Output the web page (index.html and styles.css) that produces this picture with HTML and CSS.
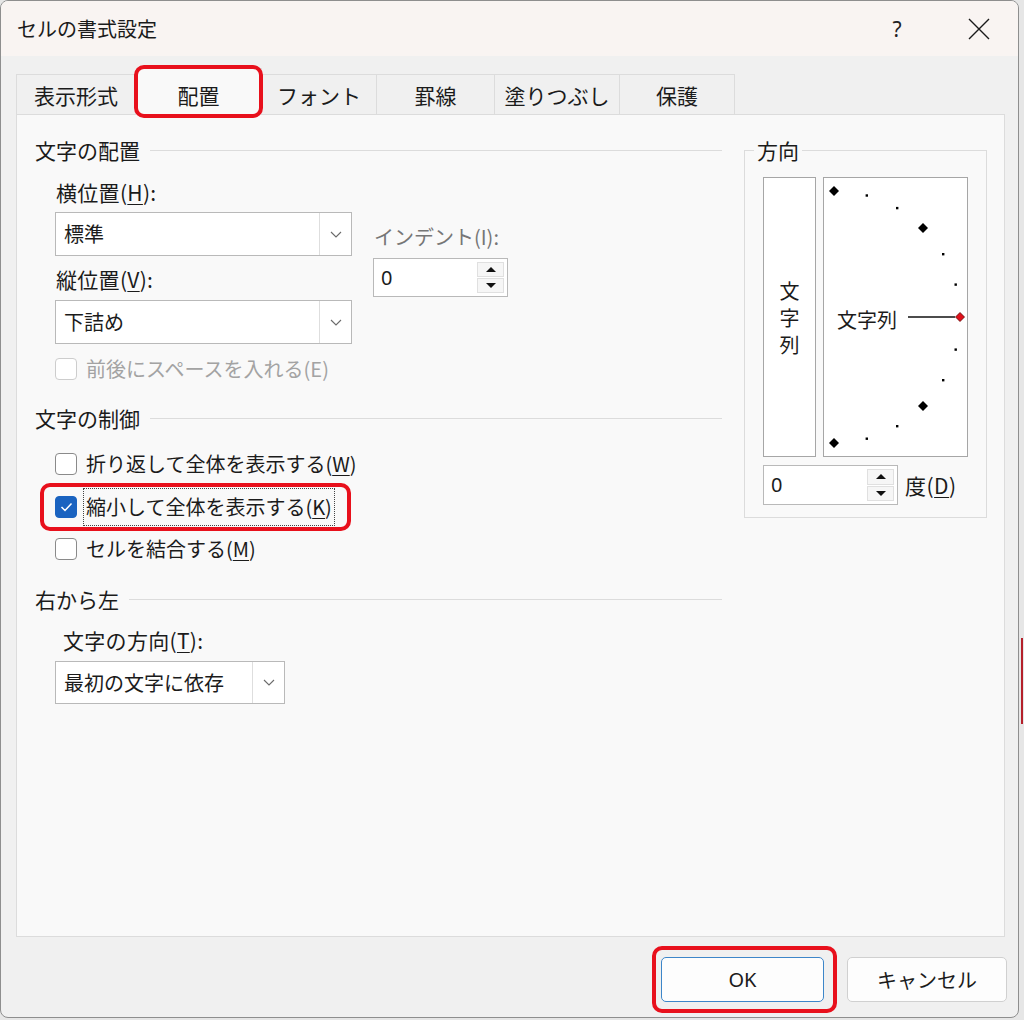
FILE: index.html
```html
<!DOCTYPE html>
<html lang="ja">
<head>
<meta charset="utf-8">
<title>セルの書式設定</title>
<link rel="stylesheet" href="styles.css">
</head>
<body>
<div class="edge-mark"></div>
<div class="window">
  <div class="titlebar">
    <div class="title">セルの書式設定</div>
    <div class="help">?</div>
    <div class="close">
      <svg width="24" height="22" viewBox="0 0 24 22"><path d="M2 1 L22 21 M22 1 L2 21" stroke="#1a1a1a" stroke-width="1.4" fill="none"/></svg>
    </div>
  </div>

  <div class="tabs">
    <div class="tab t1">表示形式</div>
    <div class="tab t2 active">配置<span class="hl hl-tab"></span></div>
    <div class="tab t3">フォント</div>
    <div class="tab t4">罫線</div>
    <div class="tab t5">塗りつぶし</div>
    <div class="tab t6">保護</div>
  </div>

  <div class="panel">
    <div class="left">
      <div class="group-head">文字の配置</div>
      <div class="align-row">
        <div class="fields">
          <div class="label">横位置(<u>H</u>):</div>
          <div class="combo">
            <div class="combo-text">標準</div>
            <div class="combo-btn"><svg width="12" height="7" viewBox="0 0 12 7"><polyline points="1,1 6,6 11,1" fill="none" stroke="#6b6b6b" stroke-width="1.1"/></svg></div>
          </div>
          <div class="label mt9">縦位置(<u>V</u>):</div>
          <div class="combo mt7">
            <div class="combo-text">下詰め</div>
            <div class="combo-btn"><svg width="12" height="7" viewBox="0 0 12 7"><polyline points="1,1 6,6 11,1" fill="none" stroke="#6b6b6b" stroke-width="1.1"/></svg></div>
          </div>
        </div>
        <div class="indent">
          <div class="label gray small">インデント(I):</div>
          <div class="spin indent-spin">
            <div class="spin-text">0</div>
            <div class="spin-btns">
              <div class="spin-b"><span class="tri-up"></span></div>
              <div class="spin-b"><span class="tri-down"></span></div>
            </div>
          </div>
        </div>
      </div>
      <div class="check disabled sub mt11">
        <span class="box"></span><span>前後にスペースを入れる(E)</span>
      </div>

      <div class="group-head mt21">文字の制御</div>
      <div class="check sub mt18">
        <span class="box"></span><span>折り返して全体を表示する(<u>W</u>)</span>
      </div>
      <div class="check sub mt15 rel">
        <span class="box checked"><svg width="13" height="10" viewBox="0 0 13 10"><polyline points="1.5,5 5,8.5 11.5,1.5" fill="none" stroke="#fff" stroke-width="1.5"/></svg></span><span class="focus">縮小して全体を表示する(<u>K</u>)</span>
        <span class="hl hl-k"></span>
      </div>
      <div class="check sub mt14">
        <span class="box"></span><span>セルを結合する(<u>M</u>)</span>
      </div>

      <div class="group-head mt22">右から左</div>
      <div class="label sub2 mt13">文字の方向(<u>T</u>):</div>
      <div class="combo combo-dir sub mt7">
        <div class="combo-text">最初の文字に依存</div>
        <div class="combo-btn"><svg width="12" height="7" viewBox="0 0 12 7"><polyline points="1,1 6,6 11,1" fill="none" stroke="#6b6b6b" stroke-width="1.1"/></svg></div>
      </div>
    </div>

    <fieldset class="orient">
      <legend>方向</legend>
      <div class="orient-boxes">
        <div class="vbox"><span>文</span><span>字</span><span>列</span></div>
        <div class="dial">
          <svg width="143" height="278" viewBox="0 0 143 278">
            <g fill="#000">
              <polygon points="10,8 15,13 10,18 5,13"/>
              <rect x="41.6" y="16.3" width="2.4" height="2.4"/>
              <rect x="72" y="28.9" width="2.4" height="2.4"/>
              <polygon points="99,45 104,50 99,55 94,50"/>
              <rect x="118" y="75" width="2.4" height="2.4"/>
              <rect x="130.5" y="105.4" width="2.4" height="2.4"/>
              <rect x="130.5" y="170.4" width="2.4" height="2.4"/>
              <rect x="118" y="201" width="2.4" height="2.4"/>
              <polygon points="99,223 104,228 99,233 94,228"/>
              <rect x="72" y="247" width="2.4" height="2.4"/>
              <rect x="41.6" y="259.5" width="2.4" height="2.4"/>
              <polygon points="10,260 15,265 10,270 5,265"/>
            </g>
            <line x1="84" y1="139" x2="131" y2="139" stroke="#111" stroke-width="1.4"/>
            <polygon points="136,134.5 140.5,139 136,143.5 131.5,139" fill="#e0101a" stroke="#5a0000" stroke-width="0.8"/>
            <text x="13" y="150" class="dial-text">文字列</text>
          </svg>
        </div>
      </div>
      <div class="deg-row">
        <div class="spin deg-spin">
          <div class="spin-text">0</div>
          <div class="spin-btns">
            <div class="spin-b"><span class="tri-up"></span></div>
            <div class="spin-b"><span class="tri-down"></span></div>
          </div>
        </div>
        <div class="deg-label">度(<u>D</u>)</div>
      </div>
    </fieldset>
  </div>

  <div class="footer">
    <div class="btn ok rel">OK<span class="hl hl-ok"></span></div>
    <div class="btn cancel">キャンセル</div>
  </div>
</div>
</body>
</html>
```

FILE: styles.css
```css
* { box-sizing: border-box; }

body {
  margin: 0;
  width: 1024px;
  height: 1020px;
  overflow: hidden;
  position: relative;
  background: #e6e6e6;
  font-family: "Noto Sans CJK JP", "Noto Sans", sans-serif;
  color: #1b1b1b;
  font-size: 20px;
}

u { text-decoration: underline; text-underline-offset: 3px; text-decoration-thickness: 1px; }

.edge-mark {
  position: absolute;
  left: 1021px;
  top: 638px;
  width: 2px;
  height: 86px;
  background: #b4202a;
}

.window {
  width: 1019px;
  height: 1018px;
  border: 1px solid #8e8e8e;
  border-radius: 8px;
  background: #f0f0f0;
  overflow: hidden;
}

.titlebar {
  height: 55px;
  background: #f9f4f2;
  display: flex;
  align-items: center;
  padding-left: 16px;
  font-size: 20px;
}
.title { flex: 1; line-height: 28px; }
.help {
  width: 60px;
  margin-right: 17px;
  text-align: center;
  font-family: "Noto Sans", sans-serif;
  font-size: 21px;
  color: #222;
}
.close {
  width: 70px;
  margin-right: 4px;
  display: flex;
  justify-content: center;
  align-items: center;
}

.tabs {
  display: flex;
  align-items: flex-end;
  margin-top: 18px;
  padding-left: 15px;
  height: 40px;
}
.tab {
  height: 40px;
  border: 1px solid #dcdcdc;
  border-bottom: none;
  border-left: none;
  display: flex;
  align-items: center;
  justify-content: center;
  font-size: 21px;
  line-height: 28px;
  background: #f0f0f0;
  position: relative;
}
.t1 { width: 120px; border-left: 1px solid #dcdcdc; }
.t2 { width: 126px; }
.t3 { width: 115px; }
.t4 { width: 118px; }
.t5 { width: 125px; }
.t6 { width: 115px; }
.tab.active {
  height: 47px;
  margin-bottom: -1px;
  background: #f9f9f9;
  z-index: 2;
  padding-bottom: 6px;
  padding-top: 0;
  align-items: flex-end;
}

.hl {
  position: absolute;
  border: 4px solid #e8101c;
  border-radius: 10px;
  pointer-events: none;
}
.hl-tab { left: -2px; top: -4px; width: 129px; height: 53px; }
.hl-k { left: -15px; top: -10px; width: 311px; height: 48px; }
.hl-ok { left: -10px; top: -12px; width: 185px; height: 67px; }
.rel { position: relative; }

.panel {
  margin-left: 15px;
  width: 989px;
  height: 823px;
  border: 1px solid #dcdcdc;
  background: #f9f9f9;
  padding: 21px 17px 0 18px;
  display: flex;
  gap: 22px;
  align-items: flex-start;
  position: relative;
  z-index: 1;
}

.left { width: 687px; }

.group-head {
  display: flex;
  align-items: center;
  height: 28px;
  line-height: 28px;
  font-size: 21px;
}
.group-head::after {
  content: "";
  flex: 1;
  height: 1px;
  background: #dcdcdc;
  margin-left: 10px;
}

.align-row {
  display: flex;
  margin-top: 14px;
  padding-left: 20px;
}
.fields { width: 297px; }
.label {
  height: 28px;
  line-height: 28px;
  font-size: 21px;
  padding-left: 1px;
  white-space: nowrap;
  letter-spacing: 0.3px;
}
.label.small { font-size: 20px; letter-spacing: 0; }
.label.gray { color: #767676; }

.combo {
  margin-top: 6px;
  height: 44px;
  width: 297px;
  border: 1px solid #b9b9b9;
  background: #fff;
  display: flex;
}
.combo-text {
  flex: 1;
  padding-left: 8px;
  line-height: 42px;
  font-size: 20px;
}
.combo-btn {
  width: 32px;
  border-left: 1px solid #dedede;
  display: flex;
  align-items: center;
  justify-content: center;
}
.combo-dir { width: 230px; height: 43px; }

.indent {
  margin-left: 21px;
  padding-top: 45px;
}

.spin {
  height: 39px;
  width: 135px;
  border: 1px solid #b9b9b9;
  background: #fff;
  display: flex;
}
.indent-spin { margin-top: 7px; }
.spin-text {
  flex: 1;
  padding-left: 7px;
  line-height: 37px;
  font-size: 20px;
  font-family: "Noto Sans", sans-serif;
}
.spin-btns {
  width: 27px;
  margin: 3px 3px 3px 0;
  display: flex;
  flex-direction: column;
  gap: 1px;
}
.spin-b {
  flex: 1;
  background: #f6f6f6;
  border: 1px solid #e0e0e0;
  display: flex;
  align-items: center;
  justify-content: center;
}
.tri-up {
  width: 0; height: 0;
  border-left: 5px solid transparent;
  border-right: 5px solid transparent;
  border-bottom: 5px solid #111;
}
.tri-down {
  width: 0; height: 0;
  border-left: 5px solid transparent;
  border-right: 5px solid transparent;
  border-top: 5px solid #111;
}

.sub { margin-left: 20px; }
.sub2 { margin-left: 27px; }

.check {
  display: flex;
  align-items: center;
  height: 28px;
  gap: 9px;
  font-size: 20px;
  line-height: 28px;
  white-space: nowrap;
}
.box {
  width: 22px;
  height: 22px;
  border: 1px solid #8a8a8a;
  border-radius: 4px;
  background: #fff;
  display: flex;
  align-items: center;
  justify-content: center;
  flex: none;
}
.box.checked {
  background: #1a63c0;
  border-color: #1a63c0;
}
.check.disabled { color: #a3a3a3; }
.check.disabled .box { border-color: #cdcdcd; }

.focus {
  display: inline-block;
  border: 1px dotted #444;
  padding: 4px 2px;
  margin: -5px -3px;
  line-height: 28px;
}

.mt7 { margin-top: 7px; }
.mt9 { margin-top: 9px; }
.mt11 { margin-top: 11px; }
.mt13 { margin-top: 13px; }
.mt14 { margin-top: 14px; }
.mt15 { margin-top: 15px; }
.mt18 { margin-top: 18px; }
.mt21 { margin-top: 21px; }
.mt22 { margin-top: 22px; }

.orient {
  margin: 0;
  width: 243px;
  border: 1px solid #dcdcdc;
  padding: 13px 18px 12px 18px;
  min-width: 0;
}
.orient legend {
  padding: 0 3px;
  margin-left: -9px;
  font-size: 21px;
  line-height: 28px;
  height: 28px;
}
.orient-boxes {
  display: flex;
  gap: 7px;
  height: 280px;
}
.vbox {
  width: 53px;
  height: 280px;
  border: 1px solid #a6a6a6;
  background: #fff;
  display: flex;
  flex-direction: column;
  align-items: center;
  justify-content: center;
  font-size: 20px;
  line-height: 27px;
}
.dial {
  width: 145px;
  height: 280px;
  border: 1px solid #a6a6a6;
  background: #fff;
}
.dial svg { display: block; }
.dial-text {
  font-family: "Noto Sans CJK JP", sans-serif;
  font-size: 20px;
  fill: #1b1b1b;
}
.deg-row {
  display: flex;
  align-items: center;
  margin-top: 8px;
}
.deg-spin { height: 40px; }
.deg-label {
  margin-left: 7px;
  font-size: 21px;
  line-height: 28px;
  letter-spacing: 0.5px;
}

.footer {
  display: flex;
  justify-content: flex-end;
  gap: 23px;
  margin-top: 20px;
  padding-right: 11px;
}
.btn {
  height: 45px;
  border: 1px solid #d0d0d0;
  border-radius: 5px;
  background: #fdfdfd;
  display: flex;
  align-items: center;
  justify-content: center;
  font-size: 20px;
}
.btn.ok {
  width: 163px;
  border-color: #3d86c9;
  font-family: "Noto Sans", sans-serif;
}
.btn.cancel { width: 160px; }
```
